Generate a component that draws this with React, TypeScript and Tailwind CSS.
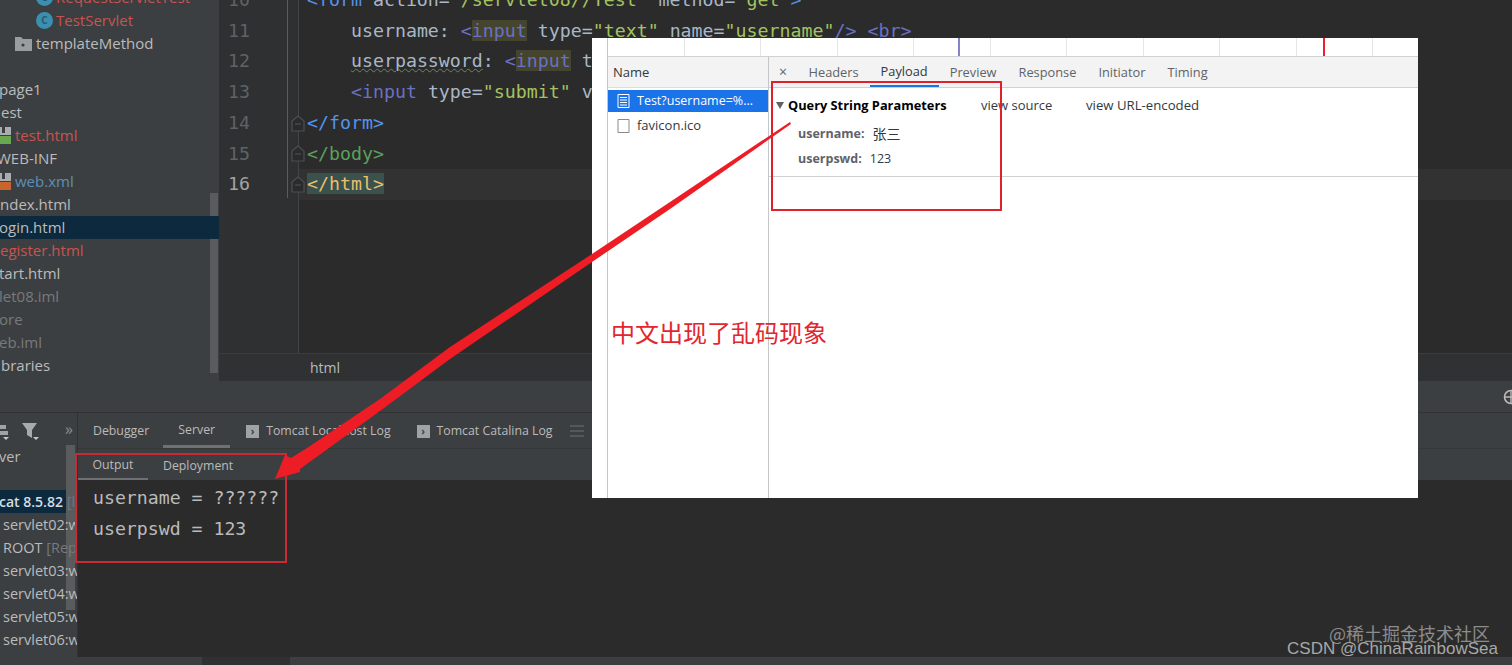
import type { ReactNode } from 'react';

const mono = "font-['DejaVu_Sans_Mono','Liberation_Mono',monospace]";

type TreeRow = {
  text: string;
  color: string;
  indent: string;
  icon?: 'class' | 'folder' | 'htmlFile' | 'xmlFile';
  selected?: boolean;
};

const treeRows: TreeRow[] = [
  { text: 'RequestServletTest', color: 'text-[#c75450]', indent: 'pl-[36px]', icon: 'class' },
  { text: 'TestServlet', color: 'text-[#c75450]', indent: 'pl-[36px]', icon: 'class' },
  { text: 'templateMethod', color: 'text-[#bbbbbb]', indent: 'pl-[15px]', icon: 'folder' },
  { text: '', color: 'text-[#bbbbbb]', indent: 'pl-0' },
  { text: 'page1', color: 'text-[#bbbbbb]', indent: '-ml-px' },
  { text: 'est', color: 'text-[#bbbbbb]', indent: 'pl-px' },
  { text: 'test.html', color: 'text-[#c75450]', indent: '-ml-[3px]', icon: 'htmlFile' },
  { text: 'WEB-INF', color: 'text-[#bbbbbb]', indent: '-ml-[3px]' },
  { text: 'web.xml', color: 'text-[#5c8fb8]', indent: '-ml-[3px]', icon: 'xmlFile' },
  { text: 'ndex.html', color: 'text-[#bbbbbb]', indent: 'pl-0' },
  { text: 'ogin.html', color: 'text-[#bbbbbb]', indent: '-ml-px', selected: true },
  { text: 'egister.html', color: 'text-[#c75450]', indent: 'pl-0' },
  { text: 'tart.html', color: 'text-[#bbbbbb]', indent: '-ml-px' },
  { text: 'let08.iml', color: 'text-[#777a7c]', indent: '-ml-px' },
  { text: 'ore', color: 'text-[#777a7c]', indent: '-ml-px' },
  { text: 'eb.iml', color: 'text-[#777a7c]', indent: '-ml-px' },
  { text: 'braries', color: 'text-[#bbbbbb]', indent: 'pl-px' },
];

const serverRows = [
  { name: 'servlet02:w', tail: '' },
  { name: 'ROOT', tail: ' [Rep' },
  { name: 'servlet03:w', tail: '' },
  { name: 'servlet04:w', tail: '' },
  { name: 'servlet05:w', tail: '' },
  { name: 'servlet06:w', tail: '' },
];

function TreeIcon({ kind }: { kind: NonNullable<TreeRow['icon']> }) {
  if (kind === 'class') {
    return (
      <span className="mr-[3px] flex h-[17px] w-[17px] shrink-0 items-center justify-center rounded-full bg-[#3b8fb0] text-[10px] font-bold text-[#2b5a6e]">
        C
      </span>
    );
  }
  if (kind === 'folder') {
    return (
      <svg width="17" height="15" viewBox="0 0 17 15" className="mr-[4px] shrink-0">
        <path d="M0 1h6l2 2h9v12H0z" fill="#9a9d9f" />
        <circle cx="8" cy="9" r="1.6" fill="#3c3f41" />
      </svg>
    );
  }
  const accent = kind === 'htmlFile' ? '#6aa84f' : '#c8642c';
  return (
    <svg width="18" height="17" viewBox="0 0 18 17" className="shrink-0">
      <path d="M0 0h14v8H0z" fill="#a9adb0" />
      <path d="M5 0h3v6H5z" fill="#3c3f41" />
      <path d="M0 9h14v8H0z" fill={accent} />
    </svg>
  );
}

function ProjectTree() {
  return (
    <aside className="relative flex h-full w-[219px] shrink-0 flex-col overflow-hidden bg-[#3c3f41] text-[15px]">
      <div className="absolute right-px top-[193px] h-[180px] w-[8px] bg-[#595b5d]" />
      <div className="relative -mt-[14.5px] flex flex-col">
        {treeRows.map((row, i) => (
          <div
            key={i}
            className={`flex h-[23px] shrink-0 items-center whitespace-nowrap ${row.indent} ${row.color} ${
              row.selected ? 'bg-[#0d293e]' : ''
            }`}
          >
            {row.icon && <TreeIcon kind={row.icon} />}
            <span>{row.text}</span>
          </div>
        ))}
      </div>
    </aside>
  );
}

function Tag({ children }: { children: ReactNode }) {
  return <span className="bg-[#45442f] text-[#6a70c4]">{children}</span>;
}

function CodeRow({ num, current, fold, children }: { num: number; current?: boolean; fold?: boolean; children?: ReactNode }) {
  return (
    <div className={`flex h-[30.8px] shrink-0 items-center ${current ? 'bg-[#323232]' : ''}`}>
      <div className={`flex h-full w-[80px] shrink-0 items-center border-r border-[#424445] bg-[#2f3031] pl-[9px] ${current ? 'text-[#a4a3a3]' : 'text-[#606366]'}`}>
        <span className="w-[63px] shrink-0">{num}</span>
        {fold && (
          <svg width="14" height="18" viewBox="0 0 14 18" className="relative shrink-0">
            <path d="M1 7l6-5 6 5v10H1z" fill="#2b2b2b" stroke="#4d4f50" strokeWidth="1.2" />
            <path d="M4 10h6" stroke="#4d4f50" strokeWidth="1.2" />
          </svg>
        )}
      </div>
      <div className="whitespace-pre pl-[8px] text-[#a9b7c6]">{children}</div>
    </div>
  );
}

function CodeEditor() {
  const val = 'text-[#a5c261]';
  const br = 'text-[#6a70c4]';
  return (
    <section className={`relative flex min-w-0 flex-1 flex-col overflow-hidden bg-[#2b2b2b] text-[18.25px] ${mono}`}>
      <div className="-mt-[16px] flex flex-1 flex-col">
        <CodeRow num={10}>
          <span className="text-[#5394ec]">&lt;form</span> action=<span className={val}>"/servlet08//Test"</span> method=<span className={val}>"get"</span>
          <span className="text-[#5394ec]">&gt;</span>
        </CodeRow>
        <CodeRow num={11}>
          {'    '}username: <span className={br}>&lt;</span>
          <Tag>input</Tag> type=<span className={val}>"text"</span> name=<span className={val}>"username"</span>
          <span className={br}>/&gt; &lt;br&gt;</span>
        </CodeRow>
        <CodeRow num={12}>
          {'    '}
          <span className="underline decoration-wavy decoration-[#6a8a5a] decoration-1">userpassword</span>: <span className={br}>&lt;</span>
          <Tag>input</Tag> type=<span className={val}>"password"</span>
        </CodeRow>
        <CodeRow num={13}>
          {'    '}
          <span className={br}>&lt;input</span> type=<span className={val}>"submit"</span> value
        </CodeRow>
        <CodeRow num={14} fold>
          <span className="text-[#5394ec]">&lt;/form&gt;</span>
        </CodeRow>
        <CodeRow num={15} fold>
          <span className="text-[#5ba05b]">&lt;/body&gt;</span>
        </CodeRow>
        <CodeRow num={16} current fold>
          <span className="bg-[#3b514d] text-[#e8bf6a]">&lt;/html&gt;</span>
        </CodeRow>
        <div className="flex flex-1">
          <div className="w-[80px] shrink-0 border-r border-[#424445] bg-[#2f3031]" />
        </div>
      </div>
      <div className="flex h-[28px] shrink-0 items-center border-t border-[#3a3c3d] bg-[#2f3133] pl-[91px] font-['Open_Sans',sans-serif] text-[14px] text-[#bbbbbb]">
        html
      </div>
      <div className="absolute left-[68px] top-0 h-[198px] w-px bg-[#3f6a60]" />
    </section>
  );
}

function LogIcon() {
  return (
    <span className="mr-[7px] flex h-[13px] w-[13px] items-center justify-center bg-[#a0a3a5] text-[10px] font-bold leading-none text-[#3c3f41]">
      ›
    </span>
  );
}

function ServerList() {
  return (
    <div className="relative flex w-[78px] shrink-0 flex-col overflow-hidden border-r border-[#323232] bg-[#3c3f41] text-[14.5px] text-[#bbbbbb]">
      <div className="absolute left-[66px] top-[32px] h-[165px] w-[9px] bg-[#595b5d]" />
      <div className="flex h-[35px] shrink-0 items-center">
        <svg width="10" height="18" viewBox="0 0 10 18" className="shrink-0">
          <path d="M0 3h6v4H0zM0 9h8v4H0z" fill="#a0a3a5" />
          <path d="M3 15h6l-3 3z" fill="#c4c6c8" />
        </svg>
        <svg width="17" height="20" viewBox="0 0 17 20" className="ml-[12px] shrink-0">
          <path d="M0 2h15l-5 7v8l-5-3V9z" fill="#a8abad" />
          <path d="M11 16h6l-3 3z" fill="#c4c6c8" />
        </svg>
        <span className="relative -top-[2px] ml-[26px] text-[16px] leading-none text-[#8b8e90]">»</span>
      </div>
      <div className="relative -mt-[3px] -ml-px flex h-[23px] shrink-0 items-center">ver</div>
      <div className="h-[22px] shrink-0" />
      <div className="relative -ml-px flex h-[23px] w-[67px] shrink-0 items-center whitespace-nowrap bg-[#0d293e] text-[14px] font-semibold text-[#d5dde3]">
        cat 8.5.82 <span className="ml-1 font-normal text-[#667a88]">[l</span>
      </div>
      {serverRows.map((row) => (
        <div key={row.name} className="relative flex h-[23px] shrink-0 items-center whitespace-nowrap pl-[3px]">
          {row.name}
          <span className="whitespace-pre text-[#777a7c]">{row.tail}</span>
        </div>
      ))}
    </div>
  );
}

function RunPanel() {
  return (
    <div className="flex h-[244px] shrink-0 font-['Open_Sans',sans-serif]">
      <ServerList />
      <div className="flex min-w-0 flex-1 flex-col bg-[#2b2b2b]">
        <div className="flex h-[36px] shrink-0 items-center border-b border-[#353739] bg-[#3c3f41] text-[12.3px] text-[#bbbbbb]">
          <span className="pl-[15px] pt-px">Debugger</span>
          <div className="ml-[14px] flex h-full w-[67px] items-center justify-center border-b-[3px] border-[#6e7173] pt-[3px]">Server</div>
          <div className="ml-[16px] flex items-center pt-px">
            <LogIcon />
            Tomcat Localhost Log
          </div>
          <div className="ml-[26px] flex items-center pt-px">
            <LogIcon />
            Tomcat Catalina Log
          </div>
          <div className="ml-[18px] flex w-[14px] flex-col gap-[3px]">
            <span className="h-[2px] bg-[#55585a]" />
            <span className="h-[2px] bg-[#55585a]" />
            <span className="h-[2px] bg-[#55585a]" />
          </div>
        </div>
        <div className="flex h-[31px] shrink-0 items-center bg-[#3c3f41] text-[12.3px] text-[#bbbbbb]">
          <div className="flex h-full w-[70px] items-center justify-center border-b-[2px] border-[#6e7173] pt-[3px]">Output</div>
          <span className="ml-[15px] pt-[3px]">Deployment</span>
        </div>
        <div className={`flex-1 pl-[15px] pt-[2px] text-[18.2px] leading-[31px] text-[#bbbbbb] ${mono}`}>
          <div>username = ??????</div>
          <div>userpswd = 123</div>
        </div>
      </div>
    </div>
  );
}

function DevtoolsPanel() {
  const tabs = ['Headers', 'Payload', 'Preview', 'Response', 'Initiator', 'Timing'];
  return (
    <div className="absolute left-[592px] top-[38px] flex h-[460px] w-[826px] bg-white font-['Open_Sans',sans-serif] text-[12.5px] text-[#303942]">
      <div className="w-[16px] shrink-0 border-r border-[#c4c7ca]" />
      <div className="flex min-w-0 flex-1 flex-col">
        <div className="relative flex h-[19px] shrink-0 overflow-hidden border-b border-[#cfd2d5]">
          {Array.from({ length: 11 }).map((_, i) => (
            <div key={i} className="h-full w-[76.5px] shrink-0 border-r border-[#e6e6e6]" />
          ))}
          <div className="absolute left-[350px] top-0 h-full w-[2px] bg-[#8383cc]" />
          <div className="absolute left-[715px] top-0 h-full w-[1.5px] bg-[#ee2030]" />
        </div>
        <div className="flex min-h-0 flex-1">
          <div className="flex w-[161px] shrink-0 flex-col border-r border-[#c4c7ca]">
            <div className="flex h-[31px] shrink-0 items-center border-b border-[#dadce0] bg-[#f3f3f3] pl-[5px] pt-[2px] text-[13px]">Name</div>
            <div className="mt-[2px] flex h-[22px] items-center bg-[#1a73e8] pl-[9px] text-white">
              <svg width="13" height="14" viewBox="0 0 13 14" className="mr-[7px] shrink-0">
                <path d="M1 .5h11v13H1z" fill="none" stroke="#fff" />
                <path d="M3 3.5h7M3 6h7M3 8.5h7M3 11h7" stroke="#fff" />
              </svg>
              Test?username=%...
            </div>
            <div className="flex h-[28px] items-center pl-[9px] text-[13px]">
              <svg width="13" height="14" viewBox="0 0 13 14" className="mr-[7px] shrink-0">
                <path d="M1 .5h11v13H1z" fill="none" stroke="#8a8a8a" />
              </svg>
              favicon.ico
            </div>
          </div>
          <div className="flex min-w-0 flex-1 flex-col">
            <div className="flex h-[31px] shrink-0 items-center border-b border-[#cfd2d5] bg-[#f3f3f3] text-[12.8px] text-[#5f6368]">
              <span className="ml-[10px] mr-[10.5px] text-[14px] leading-none">×</span>
              {tabs.map((tab) => (
                <div
                  key={tab}
                  className={`flex h-full items-center px-[11px] pt-px ${
                    tab === 'Payload' ? 'border-b-2 border-[#1a73e8] text-[#303942]' : ''
                  }`}
                >
                  {tab}
                </div>
              ))}
            </div>
            <div className="flex h-[89px] shrink-0 flex-col border-b border-[#d0d0d0]">
              <div className="flex h-[35px] items-center pl-[7px] text-[13px]">
                <span className="mr-[4px] h-0 w-0 border-x-[4px] border-t-[7px] border-x-transparent border-t-[#5f6368]" />
                <span className="w-[193px] text-[12.8px] font-bold text-black">Query String Parameters</span>
                <span className="w-[105px]">view source</span>
                <span className="text-[13.2px]">view URL-encoded</span>
              </div>
              <div className="flex h-[23px] items-center pl-[29px]">
                <span className="mr-[8px] font-bold text-[#5f6368]">username:</span>
                <span className="relative -top-px font-['Noto_Sans_CJK_SC',sans-serif] text-[14px]">张三</span>
              </div>
              <div className="flex h-[26px] items-center pl-[29px]">
                <span className="mr-[8px] font-bold text-[#5f6368]">userpswd:</span>
                123
              </div>
            </div>
          </div>
        </div>
      </div>
      <div className="absolute left-[179px] top-[43px] h-[130px] w-[231px] border-2 border-[#e0202a]" />
      <div className="absolute left-[19px] top-[279px] font-['Noto_Sans_CJK_SC',sans-serif] text-[24px] leading-[30px] text-[#e3262e]">
        中文出现了乱码现象
      </div>
    </div>
  );
}

export default function App() {
  return (
    <div className="relative flex h-[665px] w-[1512px] flex-col overflow-hidden bg-[#2b2b2b] font-['Open_Sans',sans-serif]">
      <div className="flex h-[381px] shrink-0">
        <ProjectTree />
        <CodeEditor />
      </div>
      <div className="relative h-[32px] shrink-0 border-b border-[#323232] bg-[#3c3f41]">
        <svg width="16" height="16" viewBox="0 0 16 16" className="absolute -right-[7px] top-[8px]">
          <circle cx="8" cy="8" r="6.5" fill="none" stroke="#bbbbbb" strokeWidth="1.6" />
          <path d="M8 2v12M2 8h12" stroke="#bbbbbb" strokeWidth="1.4" />
        </svg>
      </div>
      <RunPanel />
      <div className="flex h-[8px] shrink-0 bg-[#3c3f41]">
        <div className="ml-[202px] h-full w-[88px] bg-[#2f3031]" />
      </div>

      <DevtoolsPanel />

      <div className="absolute left-[75px] top-[453px] h-[110px] w-[212px] border-2 border-[#c92a33]" />

      <svg width="1512" height="665" viewBox="0 0 1512 665" className="pointer-events-none absolute left-0 top-0">
        <path
          d="M790 122L670 202 592 254 450 347 380 399 307 448 291 458 285 455 275 479 300 472 300 469 380 411 450 359 592 262 670 209 791 124z"
          fill="#ee1c25"
        />
      </svg>

      <div className="absolute right-[22px] top-[622px] font-['Noto_Sans_CJK_SC',sans-serif] text-[18px] leading-[22px] text-[#8c8c8c]">
        @稀土掘金技术社区
      </div>
      <div className="absolute right-[14px] top-[638px] font-['Liberation_Sans',sans-serif] text-[17px] leading-[22px] text-[#a8a8a8]">
        CSDN @ChinaRainbowSea
      </div>
    </div>
  );
}
